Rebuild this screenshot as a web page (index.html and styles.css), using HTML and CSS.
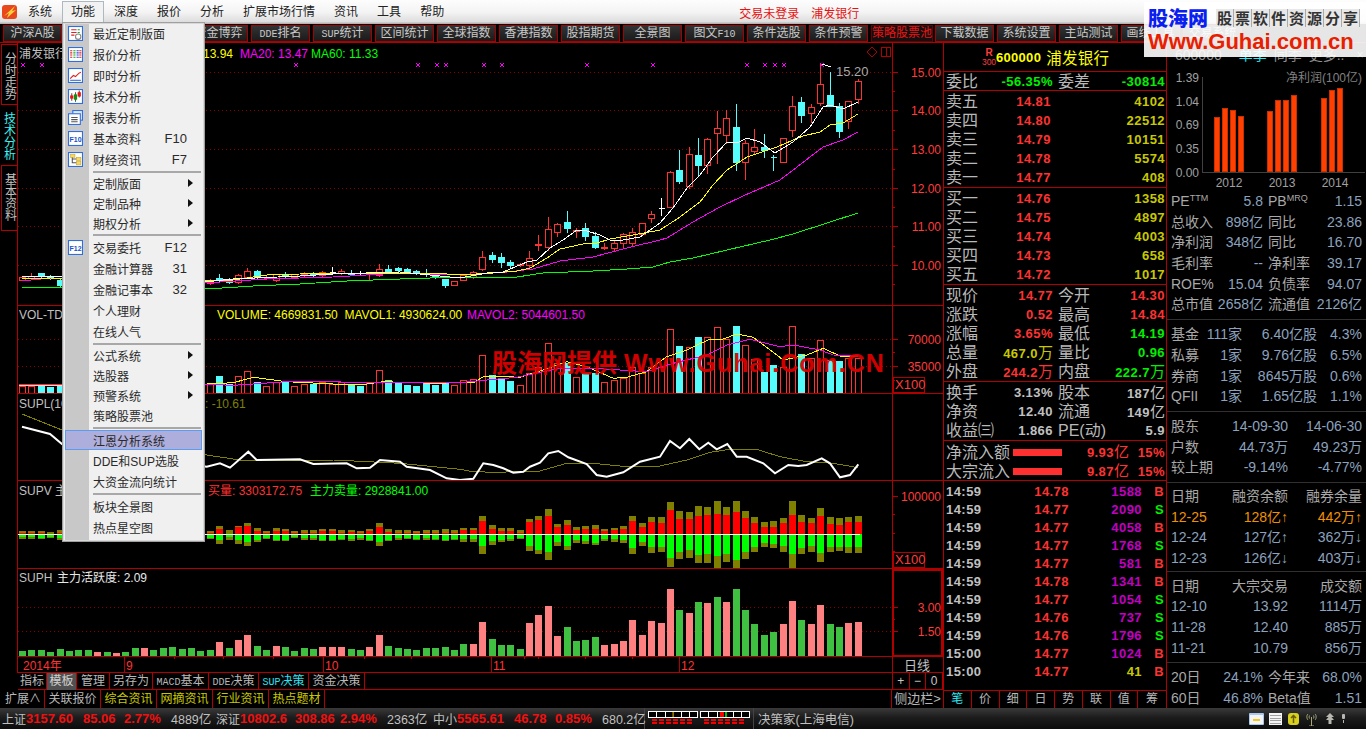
FILE: index.html
```html
<!DOCTYPE html>
<html lang="zh-CN">
<head>
<meta charset="utf-8">
<title>决策家 - 浦发银行</title>
<link rel="stylesheet" href="styles.css">
</head>
<body>
<div class="app">
  <header class="menubar">
    <svg class="logo-mark" viewBox="0 0 16 16"><rect x="0" y="1" width="15" height="14" rx="3" class="lm-a"/><path d="M2 12 L13 2 L10 7 L14 6 L5 14 L7 9 Z" class="lm-b"/></svg>
    <nav class="nav">
      <span class="nav-item">系统</span><span class="nav-item nav-on">功能</span><span class="nav-item">深度</span><span class="nav-item">报价</span><span class="nav-item">分析</span><span class="nav-item">扩展市场行情</span><span class="nav-item">资讯</span><span class="nav-item">工具</span><span class="nav-item">帮助</span>
    </nav>
    <div class="login"><span>交易未登录</span><span>浦发银行</span></div>
  </header>

  <div class="toolbar">
    <span class="tb">沪深A股</span><span class="tb"></span><span class="tb"></span><span class="tb tb-clip">资金博弈</span><span class="tb"><i class="lat">DDE</i>排名</span><span class="tb"><i class="lat">SUP</i>统计</span><span class="tb">区间统计</span><span class="tb">全球指数</span><span class="tb">香港指数</span><span class="tb">股指期货</span><span class="tb">全景图</span><span class="tb">图文<i class="lat">F10</i></span><span class="tb">条件选股</span><span class="tb">条件预警</span><span class="tb tb-on">策略股票池</span><span class="tb">下载数据</span><span class="tb">系统设置</span><span class="tb">主站测试</span><span class="tb">画线工具</span><span class="tb">交易系统</span>
  </div>

  <main class="main">
    <section class="left">
      <div class="upper">
        <aside class="rail">
          <div class="rail-tab rail-a">分时走势</div>
          <div class="rail-tab rail-b">技术分析</div>
          <div class="rail-tab rail-c">基本资料</div>
        </aside>
        <div class="panes">
          <div class="pane pane-k" id="p-k"></div>
          <div class="pane pane-v" id="p-v"></div>
          <div class="pane pane-l" id="p-l"></div>
          <div class="pane pane-s" id="p-s"></div>
          <div class="pane pane-h" id="p-h"></div>
          <div class="pane pane-d" id="p-d"></div>
        </div>
      </div>
      <div class="tabs">
        <div class="tabs-l">
          <span class="tab">指标</span><span class="tab tab-on">模板</span><span class="tab">管理</span><span class="tab">另存为</span><span class="tab"><i class="lat">MACD</i>基本</span><span class="tab"><i class="lat">DDE</i>决策</span><span class="tab tab-cy"><i class="lat">SUP</i>决策</span><span class="tab">资金决策</span>
        </div>
        <div class="tabs-r"><span>+</span><span>−</span><span>0</span></div>
      </div>
      <div class="ext">
        <div class="ext-l">
          <span class="ex">扩展∧</span><span class="ex">关联报价</span><span class="ex ex-y">综合资讯</span><span class="ex ex-y">网摘资讯</span><span class="ex ex-y">行业资讯</span><span class="ex ex-y">热点题材</span>
        </div>
        <div class="ext-r">侧边栏&gt;</div>
      </div>
    </section>

    <section class="quote">
      <div class="q-head"><span class="q-r"><b>R</b>300</span><span class="q-code">600000</span><span class="q-name">浦发银行</span></div>
      <div class="q-sec q-wei">
        <div class="r4"><span class="lb">委比</span><span class="v gr">-56.35%</span><span class="lb l2">委差</span><span class="v gr">-30814</span></div>
      </div>
      <div class="q-sec q-pad">
        <div class="r3"><span class="lb">卖五</span><span class="v rd">14.81</span><span class="v yl">4102</span></div>
        <div class="r3"><span class="lb">卖四</span><span class="v rd">14.80</span><span class="v yl">22512</span></div>
        <div class="r3"><span class="lb">卖三</span><span class="v rd">14.79</span><span class="v yl">10151</span></div>
        <div class="r3"><span class="lb">卖二</span><span class="v rd">14.78</span><span class="v yl">5574</span></div>
        <div class="r3"><span class="lb">卖一</span><span class="v rd">14.77</span><span class="v yl">408</span></div>
      </div>
      <div class="q-sec q-pad">
        <div class="r3"><span class="lb">买一</span><span class="v rd">14.76</span><span class="v yl">1358</span></div>
        <div class="r3"><span class="lb">买二</span><span class="v rd">14.75</span><span class="v yl">4897</span></div>
        <div class="r3"><span class="lb">买三</span><span class="v rd">14.74</span><span class="v yl">4003</span></div>
        <div class="r3"><span class="lb">买四</span><span class="v rd">14.73</span><span class="v yl">658</span></div>
        <div class="r3"><span class="lb">买五</span><span class="v rd">14.72</span><span class="v yl">1017</span></div>
      </div>
      <div class="q-sec q-pad">
        <div class="r4"><span class="lb">现价</span><span class="v rd">14.77</span><span class="lb l2">今开</span><span class="v rd">14.30</span></div>
        <div class="r4"><span class="lb">涨跌</span><span class="v rd">0.52</span><span class="lb l2">最高</span><span class="v rd">14.84</span></div>
        <div class="r4"><span class="lb">涨幅</span><span class="v rd">3.65%</span><span class="lb l2">最低</span><span class="v gr">14.19</span></div>
        <div class="r4"><span class="lb">总量</span><span class="v yl">467.0<u>万</u></span><span class="lb l2">量比</span><span class="v gr">0.96</span></div>
        <div class="r4"><span class="lb">外盘</span><span class="v rd">244.2<u>万</u></span><span class="lb l2">内盘</span><span class="v gr">222.7<u>万</u></span></div>
      </div>
      <div class="q-sec q-pad">
        <div class="r4"><span class="lb">换手</span><span class="v wh">3.13%</span><span class="lb l2">股本</span><span class="v wh">187<u>亿</u></span></div>
        <div class="r4"><span class="lb">净资</span><span class="v wh">12.40</span><span class="lb l2">流通</span><span class="v wh">149<u>亿</u></span></div>
        <div class="r4"><span class="lb">收益㈢</span><span class="v wh">1.866</span><span class="lb l2">PE(动)</span><span class="v wh">5.9</span></div>
      </div>
      <div class="q-sec q-pad">
        <div class="rf"><span class="lb">净流入额</span><span class="flow"></span><span class="v rd">9.93<u>亿</u></span><span class="v rd">15%</span></div>
        <div class="rf"><span class="lb">大宗流入</span><span class="flow"></span><span class="v rd">9.87<u>亿</u></span><span class="v rd">15%</span></div>
      </div>
      <div class="q-ticks">
        <div class="rt"><span class="v wh">14:59</span><span class="v rd">14.78</span><span class="v mg">1588</span><span class="v rd">B</span></div>
        <div class="rt"><span class="v wh">14:59</span><span class="v rd">14.77</span><span class="v mg">2090</span><span class="v gr">S</span></div>
        <div class="rt"><span class="v wh">14:59</span><span class="v rd">14.77</span><span class="v mg">4058</span><span class="v rd">B</span></div>
        <div class="rt"><span class="v wh">14:59</span><span class="v rd">14.77</span><span class="v mg">1768</span><span class="v gr">S</span></div>
        <div class="rt"><span class="v wh">14:59</span><span class="v rd">14.77</span><span class="v mg">581</span><span class="v rd">B</span></div>
        <div class="rt"><span class="v wh">14:59</span><span class="v rd">14.78</span><span class="v mg">1341</span><span class="v rd">B</span></div>
        <div class="rt"><span class="v wh">14:59</span><span class="v rd">14.77</span><span class="v mg">1054</span><span class="v gr">S</span></div>
        <div class="rt"><span class="v wh">14:59</span><span class="v rd">14.76</span><span class="v mg">737</span><span class="v gr">S</span></div>
        <div class="rt"><span class="v wh">14:59</span><span class="v rd">14.76</span><span class="v mg">1796</span><span class="v gr">S</span></div>
        <div class="rt"><span class="v wh">15:00</span><span class="v rd">14.77</span><span class="v mg">1024</span><span class="v rd">B</span></div>
        <div class="rt"><span class="v wh">15:00</span><span class="v rd">14.77</span><span class="v yl">41</span><span class="v rd">B</span></div>
      </div>
      <div class="q-tabs"><span class="qt qt-on">笔</span><span class="qt">价</span><span class="qt">细</span><span class="qt">日</span><span class="qt">势</span><span class="qt">联</span><span class="qt">值</span><span class="qt">筹</span></div>
    </section>

    <section class="side">
      <div class="s-head"><span>600000</span><span class="s-cy">单季</span><span>同季</span><span>更多..</span><span class="s-x">×</span></div>
      <div class="s-chart" id="p-e"></div>
      <div class="s-sec s1">
        <div class="g4"><span class="sl">PE<sup>TTM</sup></span><span class="sv">5.8</span><span class="sl s2">PB<sup>MRQ</sup></span><span class="sv">1.15</span></div>
        <div class="g4"><span class="sl">总收入</span><span class="sv">898亿</span><span class="sl s2">同比</span><span class="sv">23.86</span></div>
        <div class="g4"><span class="sl">净利润</span><span class="sv">348亿</span><span class="sl s2">同比</span><span class="sv">16.70</span></div>
        <div class="g4"><span class="sl">毛利率</span><span class="sv">--</span><span class="sl s2">净利率</span><span class="sv">39.17</span></div>
        <div class="g4"><span class="sl">ROE%</span><span class="sv">15.04</span><span class="sl s2">负债率</span><span class="sv">94.07</span></div>
        <div class="g4"><span class="sl">总市值</span><span class="sv">2658亿</span><span class="sl s2">流通值</span><span class="sv">2126亿</span></div>
      </div>
      <div class="s-sec">
        <div class="gf"><span class="sl">基金</span><span class="sv">111家</span><span class="sv">6.40亿股</span><span class="sv">4.3%</span></div>
        <div class="gf"><span class="sl">私募</span><span class="sv">1家</span><span class="sv">9.76亿股</span><span class="sv">6.5%</span></div>
        <div class="gf"><span class="sl">券商</span><span class="sv">1家</span><span class="sv">8645万股</span><span class="sv">0.6%</span></div>
        <div class="gf"><span class="sl">QFII</span><span class="sv">1家</span><span class="sv">1.65亿股</span><span class="sv">1.1%</span></div>
      </div>
      <div class="s-sec">
        <div class="g3"><span class="sl">股东</span><span class="sv">14-09-30</span><span class="sv">14-06-30</span></div>
        <div class="g3"><span class="sl">户数</span><span class="sv">44.73万</span><span class="sv">49.23万</span></div>
        <div class="g3"><span class="sl">较上期</span><span class="sv">-9.14%</span><span class="sv">-4.77%</span></div>
      </div>
      <div class="s-sec s4">
        <div class="g3"><span class="sl">日期</span><span class="sl ar">融资余额</span><span class="sl ar">融券余量</span></div>
        <div class="g3 or"><span class="sv al">12-25</span><span class="sv">128亿↑</span><span class="sv">442万↑</span></div>
        <div class="g3"><span class="sv al">12-24</span><span class="sv">127亿↑</span><span class="sv">362万↓</span></div>
        <div class="g3"><span class="sv al">12-23</span><span class="sv">126亿↓</span><span class="sv">403万↓</span></div>
      </div>
      <div class="s-sec">
        <div class="g3"><span class="sl">日期</span><span class="sl ar">大宗交易</span><span class="sl ar">成交额</span></div>
        <div class="g3"><span class="sv al">12-10</span><span class="sv">13.92</span><span class="sv">1114万</span></div>
        <div class="g3"><span class="sv al">11-28</span><span class="sv">12.40</span><span class="sv">885万</span></div>
        <div class="g3"><span class="sv al">11-21</span><span class="sv">10.79</span><span class="sv">856万</span></div>
      </div>
      <div class="s-sec s-end">
        <div class="g4"><span class="sl">20日</span><span class="sv">24.1%</span><span class="sl s2">今年来</span><span class="sv">68.0%</span></div>
        <div class="g4"><span class="sl">60日</span><span class="sv">46.8%</span><span class="sl s2">Beta值</span><span class="sv">1.51</span></div>
      </div>
    </section>
  </main>

  <footer class="status">
    <div class="ticker">
      <span class="st-l">上证</span><span class="st-n">3157.60</span><span class="st-n">85.06</span><span class="st-n">2.77%</span><span class="st-m">4889亿</span>
      <span class="st-l">深证</span><span class="st-n">10802.6</span><span class="st-n">308.86</span><span class="st-n">2.94%</span><span class="st-m">2363亿</span>
      <span class="st-l">中小</span><span class="st-n">5565.61</span><span class="st-n">46.78</span><span class="st-n">0.85%</span><span class="st-m">680.2亿</span>
    </div>
    <div class="gauges">
      <svg class="gauge" viewBox="0 0 50 16">
        <rect x=".5" y=".5" width="49" height="6" class="g-box"/><path d="M8.5 0V7M17.5 0V7M25.5 0V7M33.5 0V7M41.5 0V7" class="g-div"/><rect x="24" y="1" width="1" height="5" class="g-r"/><rect x="25" y="1" width="1" height="5" class="g-g"/>
        <path d="M4 9H46M4 12H46" class="g-dash"/>
      </svg>
      <svg class="gauge" viewBox="0 0 50 16">
        <rect x=".5" y=".5" width="49" height="6" class="g-box"/><path d="M8.5 0V7M17.5 0V7M25.5 0V7M33.5 0V7M41.5 0V7" class="g-div"/><rect x="20" y="1" width="4" height="5" class="g-r"/><rect x="25" y="1" width="2" height="5" class="g-g"/>
        <path d="M4 9H46M4 12H46" class="g-dash"/>
      </svg>
    </div>
    <span class="st-src">决策家(上海电信)</span>
    <div class="st-icons">
      <svg class="si-note" viewBox="0 0 15 12"><rect width="15" height="12" rx="1" class="si-a"/><rect x="1" y="2" width="13" height="9" class="si-b"/><rect x="4" y="6" width="7" height="2" class="si-c"/></svg>
      <svg class="si-list" viewBox="0 0 13 12"><rect width="13" height="12" class="si-b"/><path d="M1 2.5H12M1 5H12M1 7.5H12M1 10H12" class="si-d"/></svg>
      <svg class="si-coin" viewBox="0 0 11 12"><rect width="11" height="12" rx="3" class="si-e"/><path d="M5.5 2V10M3 5L5.500 2.500L8 5" class="si-f"/></svg>
      <svg class="si-ant" viewBox="0 0 11 14"><path d="M5.500 5V14M3 14H8M2 2C0 4 1 7 2 8M9 2C11 4 10 7 9 8M3.500 3.500C3 4.500 3 5.500 3.500 6.500M7.500 3.500C8 4.500 8 5.500 7.500 6.500" class="si-g"/></svg>
      <svg class="si-up" viewBox="0 0 8 11"><path d="M4 0L8 4H5.500L8 7H5.500V11H2.500V7H0L2.500 4H0Z" class="si-h"/></svg>
      <svg class="si-ex" viewBox="0 0 3 9"><rect width="3" height="5" rx="1" class="si-h"/><rect x="1" y="6" width="1" height="3" class="si-h"/></svg>
    </div>
  </footer>

  <div class="menu">
    <div class="mi"><svg class="ic" viewBox="0 0 14 14"><rect x=".5" y=".5" width="13" height="13" class="ic-f"/><path d="M3 3.500H8M3 6H8M3 8.500H6" class="ic-r"/><path d="M9 3.500H11M9 6H11" class="ic-g"/><circle cx="9.500" cy="10" r="2.500" class="ic-c"/></svg><span class="mt">最近定制版面</span></div>
    <div class="mi"><svg class="ic" viewBox="0 0 14 14"><rect x=".5" y=".5" width="13" height="13" class="ic-f"/><path d="M3 3V11" class="ic-rd"/><path d="M6 3V11" class="ic-gd"/><path d="M9 3V11" class="ic-bd"/><path d="M11.500 3V11" class="ic-rd"/></svg><span class="mt">报价分析</span></div>
    <div class="mi"><svg class="ic" viewBox="0 0 14 14"><rect x=".5" y=".5" width="13" height="13" class="ic-f"/><path d="M2 10L5 7L7 8L10 5L12 4" class="ic-r"/><path d="M2 11.500H12" class="ic-b"/></svg><span class="mt">即时分析</span></div>
    <div class="mi"><svg class="ic" viewBox="0 0 14 14"><rect x=".5" y=".5" width="13" height="13" class="ic-f"/><path d="M3.500 4V11M10.500 1.500V8" class="ic-k"/><path d="M7 3V12" class="ic-k"/><rect x="2" y="6" width="3" height="3" class="ic-rf"/><rect x="5.500" y="5" width="3" height="5" class="ic-gf"/><rect x="9" y="3" width="3" height="4" class="ic-rf"/></svg><span class="mt">技术分析</span></div>
    <div class="mi"><svg class="ic" viewBox="0 0 14 14"><rect x="4.500" y=".5" width="9" height="9" class="ic-f2"/><rect x=".5" y="3.500" width="11" height="10" class="ic-f"/><path d="M3 7H9M3 9H9M3 11H9" class="ic-k"/></svg><span class="mt">报表分析</span></div>
    <div class="mi"><svg class="ic" viewBox="0 0 14 14"><rect x=".5" y=".5" width="13" height="13" class="ic-f"/><text x="1.500" y="10.500" class="ic-t">F10</text></svg><span class="mt">基本资料</span><span class="mk">F10</span></div>
    <div class="mi"><svg class="ic" viewBox="0 0 14 14"><rect x=".5" y=".5" width="13" height="13" class="ic-f"/><path d="M4 4V10H8M4 6.500H8" class="ic-k"/><rect x="2.500" y="2" width="4" height="3" class="ic-yf"/><rect x="8" y="5" width="4" height="3" class="ic-yf"/><rect x="8" y="9" width="4" height="3" class="ic-yf"/></svg><span class="mt">财经资讯</span><span class="mk">F7</span></div>
    <hr class="msep msep-3">
    <div class="mi ms"><span class="mt">定制版面</span><i class="arrow"></i></div>
    <div class="mi ms"><span class="mt">定制品种</span><i class="arrow"></i></div>
    <div class="mi ms"><span class="mt">期权分析</span><i class="arrow"></i></div>
    <hr class="msep">
    <div class="mi"><svg class="ic" viewBox="0 0 14 14"><rect x=".5" y=".5" width="13" height="13" class="ic-f"/><text x="1.500" y="10.500" class="ic-t">F12</text></svg><span class="mt">交易委托</span><span class="mk">F12</span></div>
    <div class="mi"><span class="mt">金融计算器</span><span class="mk">31</span></div>
    <div class="mi"><span class="mt">金融记事本</span><span class="mk">32</span></div>
    <div class="mi"><span class="mt">个人理财</span></div>
    <div class="mi"><span class="mt">在线人气</span></div>
    <hr class="msep msep-3">
    <div class="mi ms"><span class="mt">公式系统</span><i class="arrow"></i></div>
    <div class="mi ms"><span class="mt">选股器</span><i class="arrow"></i></div>
    <div class="mi ms"><span class="mt">预警系统</span><i class="arrow"></i></div>
    <div class="mi"><span class="mt">策略股票池</span></div>
    <hr class="msep">
    <div class="mi ms mi-on"><span class="mt">江恩分析系统</span></div>
    <div class="mi"><span class="mt">DDE和SUP选股</span></div>
    <div class="mi"><span class="mt">大资金流向统计</span></div>
    <hr class="msep">
    <div class="mi"><span class="mt">板块全景图</span></div>
    <div class="mi"><span class="mt">热点星空图</span></div>
  </div>

  <div class="wm">股海网提供 <span class="wm-lat">Www.Guhai.Com.CN</span></div>

  <div class="brand">
    <div class="brand-top"><b class="brand-cn">股海网</b><span class="brand-sub"><i>股</i><i>票</i><i>软</i><i>件</i><i>资</i><i>源</i><i>分</i><i>享</i></span></div>
    <div class="brand-url">Www.Guhai.com.cn</div>
  </div>
</div>
<script src="chart.js"></script>
</body>
</html>
```
FILE: styles.css
```css
* { box-sizing: border-box; }
html, body { margin: 0; padding: 0; background: #000; }
body { width: 1366px; height: 729px; overflow: hidden; font: 12px "Liberation Sans", "Noto Sans CJK SC", sans-serif; color: #c0c0c0; }
i, u { font-style: normal; text-decoration: none; }
.app { position: relative; width: 1366px; height: 729px; display: flex; flex-direction: column; }

/* menu bar */
.menubar { height: 24px; display: flex; align-items: center; background: linear-gradient(#fdfdfd, #f4f4f4 50%, #dedede 90%, #a8a8a8); color: #222; }
.logo-mark { width: 16px; height: 16px; margin-left: 2px; }
.lm-a { fill: #e8481c; }
.lm-b { fill: #ffd23c; }
.nav { display: flex; gap: 1px; margin-left: 1px; height: 22px; }
.nav-item { padding: 0 9px; line-height: 22px; white-space: nowrap; font-size: 12px; }
.nav-on { border: 1px solid #aeb8c0; border-bottom: 0; background: #f2f2f2; padding: 0 8px; line-height: 21px; }
.login { margin-left: 286px; display: flex; gap: 12px; color: #e81010; }

/* toolbar */
.toolbar { height: 19px; display: flex; gap: 3px; padding-left: 3px; background: #000; border-bottom: 1px solid #b00000; overflow: hidden; }
.tb { flex: 0 0 59px; height: 17px; margin-top: 1px; border: 1px solid #a80000; background: linear-gradient(#333, #1a1a1a); color: #c8c8c8; text-align: center; line-height: 15px; font-size: 12px; white-space: nowrap; }
.tb-on { flex-basis: 60px; margin-right: -1px; background: #101010; color: #f01010; border-color: #600; }
.lat { font: 10px/12px "Liberation Mono", monospace; }

/* layout */
.main { height: 665px; display: flex; background: #000; }
.left { width: 943px; display: flex; flex-direction: column; }
.upper { height: 630px; display: flex; }
.rail { width: 18px; border-right: 1px solid #b00000; display: flex; flex-direction: column; background: #000; padding-top: 1px; }
.rail-tab { writing-mode: vertical-rl; text-orientation: upright; font-size: 12px; line-height: 12px; letter-spacing: 0; width: 17px; display: flex; align-items: center; }
.rail-a { height: 61px; padding-top: 7px; border: 1px solid #b00000; border-right: 0; margin-left: 1px; width: 16px; }
.rail-b { height: 60px; padding-top: 7px; color: #40f0f0; }
.rail-c { height: 66px; padding-top: 7px; border: 1px solid #b00000; border-right: 0; margin-left: 1px; width: 16px; }
.panes { width: 925px; display: flex; flex-direction: column; }
.pane { position: relative; width: 925px; }
.pane svg { display: block; }
.pane-k { height: 263px; }
.pane-v { height: 88px; }
.pane-l { height: 87px; }
.pane-s { height: 88px; }
.pane-h { height: 88px; }
.pane-d { height: 16px; }

/* chart svg */
svg text { font-family: "Liberation Sans", "Noto Sans CJK SC", sans-serif; font-size: 12px; }
.grid { stroke: #8c0000; stroke-dasharray: 1 3; fill: none; }
.frame { stroke: #b00000; fill: none; shape-rendering: crispEdges; }
.frame2 { stroke: #b00000; stroke-width: 2; fill: none; shape-rendering: crispEdges; }
.up { fill: #000; stroke: #ff3232; shape-rendering: crispEdges; }
.dn { fill: #54fcfc; stroke: #54fcfc; shape-rendering: crispEdges; }
.upw { stroke: #ff3232; fill: none; shape-rendering: crispEdges; }
.dnw { stroke: #54fcfc; fill: none; shape-rendering: crispEdges; }
.whw { stroke: #fff; fill: none; shape-rendering: crispEdges; }
.ln { fill: none; stroke-width: 1; shape-rendering: crispEdges; }
.ln-w { stroke: #fff; }
.ln-y { stroke: #ffff00; }
.ln-m { stroke: #ff00ff; }
.ln-g { stroke: #00ff00; }
.ln-o { stroke: #808000; }
.ln-wt { fill: none; stroke: #fff; stroke-width: 2; }
.xm { stroke: #ff00ff; fill: none; shape-rendering: crispEdges; }
.b-ol { fill: #808000; }
.b-rd { fill: #ff0000; }
.b-gr { fill: #00ff00; }
.b-pk { fill: #ff8080; }
.b-gg { fill: #40c040; }
.zero { stroke: #fff; shape-rendering: crispEdges; }
.t-ax { fill: #ff3c3c; text-anchor: end; }
.t-lb { fill: #c0c0c0; }
.t-wh { fill: #e8e8e8; }
.t-y { fill: #ffff00; }
.t-m { fill: #ff00ff; }
.t-g { fill: #00ff00; }
.t-r { fill: #ff3232; }
.t-o { fill: #808000; }
.t-hi { fill: #a8a8a8; font-size: 13px; }
.t-day { fill: #c0c0c0; text-anchor: middle; font-size: 13px; }
.t-x { fill: #ff3c3c; font-size: 13px; }
.icon-l { stroke: #b00000; fill: none; }
.e-bar { fill: #ff4000; stroke: #c83000; stroke-width: 1; shape-rendering: crispEdges; }
.e-ax { fill: none; stroke: #404040; shape-rendering: crispEdges; }
svg text.e-t { fill: #a0a0a0; font-size: 12px; }
svg text.e-n { fill: #808080; font-size: 12px; }
.e-end { text-anchor: end; }
.e-mid { text-anchor: middle; }

/* tabs */
.tabs { margin-left: 18px; height: 17px; display: flex; border-bottom: 1px solid #b00000; }
.tabs-l { width: 874px; display: grid; grid-template-columns: 29px 30px 33px 43px 56px 50px 50px 56px; }
.tab { border-right: 1px solid #b00000; text-align: center; line-height: 17px; color: #b8b8b8; white-space: nowrap; }
.tab-on { background: #505050; color: #d0d0d0; }
.tab-cy { color: #30e0f0; }
.tabs-r { width: 51px; display: grid; grid-template-columns: repeat(3, 1fr); border-left: 1px solid #b00000; }
.tabs-r span { border-right: 1px solid #b00000; text-align: center; line-height: 17px; color: #c8c8c8; }
.ext { height: 18px; display: flex; margin-left: 2px; }
.ext-l { width: 889px; display: grid; grid-template-columns: 43px repeat(5, 56px); }
.ex { border-right: 1px solid #b00000; text-align: center; line-height: 18px; color: #b8b8b8; white-space: nowrap; }
.ex-y { color: #c8c800; }
.ext-r { width: 52px; border-left: 1px solid #b00000; line-height: 18px; text-align: center; color: #b8b8b8; font-size: 13px; white-space: nowrap; }

/* quote */
.quote { width: 224px; height: 665px; border-left: 1px solid #b00000; border-right: 1px solid #b00000; display: flex; flex-direction: column; font-size: 16px; }
.q-head { height: 29px; display: flex; align-items: center; border-bottom: 1px solid #b00000; padding-left: 38px; }
.q-r { display: flex; flex-direction: column; align-items: center; font-size: 8.500px; line-height: 9px; color: #ff3c3c; width: 14px; }
.q-r b { font-size: 10px; line-height: 10px; }
.q-code { font-weight: 700; font-size: 13px; color: #ffff00; margin-left: 0; letter-spacing: .3px; }
.q-name { font-size: 15.500px; color: #ffff00; margin-left: 5px; letter-spacing: .3px; }
.q-sec { border-bottom: 1px solid #b00000; padding: 0 1px 0 2px; }
.q-wei { height: 19px; }
.q-pad { padding-top: 1px; }
.lb { color: #b8b8b8; font-size: 16px; line-height: 19px; white-space: nowrap; }
.l2 { padding-left: 5px; }
.v { font: 700 13px/19px "Liberation Sans", "Noto Sans CJK SC", sans-serif; text-align: right; letter-spacing: .45px; white-space: nowrap; }
.v u { font-weight: 400; font-size: 15px; letter-spacing: 0; }
.rd { color: #ff3232; }
.gr { color: #00f000; }
.yl { color: #c8c800; }
.wh { color: #c0c0c0; }
.mg { color: #c000c0; }
.r3 { display: grid; grid-template-columns: 45px 60px 1fr; height: 19px; }
.r4 { display: grid; grid-template-columns: 40px 67px 50px 1fr; height: 19px; }
.rf { display: grid; grid-template-columns: 67px 58px 1fr 36px; height: 19px; align-items: center; }
.flow { width: 49px; height: 7px; background: #ff3030; }
.q-ticks { flex: 1; padding: 2px 2px 0 2px; border-bottom: 1px solid #b00000; }
.rt { display: grid; grid-template-columns: 36px 87px 73px 1fr; height: 18px; }
.rt .v { line-height: 18px; }
.rt .v:first-child { text-align: left; }
.q-tabs { height: 17px; display: grid; grid-template-columns: repeat(8, 1fr); font-size: 12px; }
.qt { border-right: 1px solid #b00000; text-align: center; line-height: 17px; color: #b8b8b8; }
.qt:last-child { border-right: 0; }
.qt-on { color: #30e8f0; }

/* side */
.side { width: 199px; height: 665px; font-size: 14px; display: flex; flex-direction: column; color: #a0a8b0; }
.s-head { height: 24px; display: flex; padding-left: 8px; gap: 7px; line-height: 24px; color: #909090; align-items: center; white-space: nowrap; }
.s-head span:nth-child(2) { margin-left: 10px; }
.s-cy { color: #30e8f0; }
.s-x { margin-left: 5px; font-size: 12px; }
.s-chart { height: 124px; }
.s-chart svg { display: block; }
.s-sec { padding: 4px 4px 4px 4px; border-bottom: 1px solid #303030; }
.s1 { padding-top: 0; }
.s4 { padding-top: 3px; padding-bottom: 2px; }
.s-end { border-bottom: 0; }
.sl { color: #a8a8a8; white-space: nowrap; line-height: 20.700px; }
.sl sup { font-size: 9px; line-height: 0; vertical-align: 5px; }
.sv { color: #8ca2be; text-align: right; white-space: nowrap; line-height: 20.700px; }
.ar { text-align: right; }
.al { text-align: left; }
.s2 { padding-left: 5px; }
.g4 { display: grid; grid-template-columns: 41px 51px 46px 1fr; height: 20.700px; }
.gf { display: grid; grid-template-columns: 28px 43px 75px 1fr; height: 20.700px; }
.g3 { display: grid; grid-template-columns: 40px 77px 1fr; height: 20.700px; }
.or .sv { color: #f09000; }

/* status */
.status { height: 21px; display: flex; align-items: center; background: linear-gradient(#3a3a3a, #1c1c1c 45%, #0c0c0c); }
.ticker { width: 645px; display: grid; grid-template-columns: 2px 24px 57px 41px 47px 45px 24px 55px 45px 47px 46px 24px 57px 41px 47px 1fr; align-items: center; border-right: 1px solid #444; height: 21px; white-space: nowrap; }
.ticker::before { content: ""; }
.st-l { font-size: 12px; color: #c0c0c0; }
.st-n { font: 700 13px "Liberation Sans", sans-serif; color: #f01010; }
.st-m { font-size: 12.500px; color: #c0c0c0; }
.gauges { display: flex; gap: 2px; padding: 0 3px; border-right: 1px solid #444; height: 21px; align-items: center; }
.gauge { width: 50px; height: 16px; display: block; }
.g-box { fill: #000; stroke: #fff; shape-rendering: crispEdges; }
.g-div { stroke: #fff; shape-rendering: crispEdges; fill: none; }
.g-r { fill: #ff0000; }
.g-g { fill: #00c000; }
.g-dash { stroke: #f00000; stroke-width: 2; stroke-dasharray: 5 2; fill: none; shape-rendering: crispEdges; }
.st-src { margin-left: 4px; font-size: 12.500px; color: #c0c0c0; white-space: nowrap; }
.st-icons { margin-left: auto; display: flex; align-items: center; height: 21px; }
.si-note { width: 15px; height: 12px; margin-right: 5px; }
.si-list { width: 13px; height: 12px; margin-right: 6px; }
.si-coin { width: 11px; height: 12px; margin-right: 7px; }
.si-ant { width: 11px; height: 14px; margin-right: 9px; }
.si-up { width: 8px; height: 11px; margin-right: 8px; }
.si-ex { width: 3px; height: 9px; margin-right: 21px; }
.si-a { fill: #a8c8f0; }
.si-b { fill: #f4f4f4; }
.si-c { fill: #f0c820; }
.si-d { stroke: #a0a0a0; fill: none; shape-rendering: crispEdges; }
.si-e { fill: #d8d020; }
.si-f { stroke: #6a5a00; stroke-width: 1.500; fill: none; }
.si-g { stroke: #a8a878; fill: none; }
.si-h { fill: #b8b8b0; }

/* dropdown */
.menu { position: absolute; left: 62px; top: 22px; width: 143px; height: 520px; padding: 0 2px 2px 2px; border: 1px solid #a0a0a0; box-shadow: inset 0 0 0 1px #d8d8d8; background: linear-gradient(90deg, #f0f0f0 2px, #c8c8c8 2px, #c8c8c8 26px, #f0f0f0 26px); color: #2a2a2a; font-size: 12px; }
.mi { position: relative; height: 21px; display: flex; align-items: center; padding-left: 28px; white-space: nowrap; }
.ms { height: 20px; }
.mt { flex: 1; }
.mk { position: absolute; right: 15px; font-size: 13px; }
.ic { position: absolute; left: 3px; top: 3px; width: 15px; height: 15px; }
.ic-f { fill: #fff; stroke: #2f6fdc; }
.ic-f2 { fill: #dce8fa; stroke: #2f6fdc; }
.ic-r { stroke: #e02020; fill: none; }
.ic-g { stroke: #20a020; fill: none; }
.ic-b { stroke: #2f6fdc; fill: none; }
.ic-k { stroke: #555; fill: none; }
.ic-c { fill: #fff; stroke: #888; }
.ic-rd { stroke: #e02020; stroke-width: 2; stroke-dasharray: 1 1; fill: none; }
.ic-gd { stroke: #20a020; stroke-width: 2; stroke-dasharray: 1 1; fill: none; }
.ic-bd { stroke: #2040e0; stroke-width: 2; stroke-dasharray: 1 1; fill: none; }
.ic-rf { fill: #f01010; }
.ic-gf { fill: #109010; }
.ic-yf { fill: #f8d860; stroke: #c0a020; stroke-width: .5; }
svg text.ic-t { font-size: 6.500px; fill: #1a50c8; font-weight: 700; }
.msep { height: 2px; border: 0; margin: 1px 0 1px 28px; background: #a8a8a8; margin-right: 1px; }
.msep-3 { margin-top: 1px; margin-bottom: 0; }
.arrow { position: absolute; right: 9px; top: 6px; border-left: 5px solid #111; border-top: 4px solid transparent; border-bottom: 4px solid transparent; }
.mi-on { background: #aeaedc; outline: 1px solid #5a9cf0; outline-offset: -1px; }

/* overlays */
.wm { position: absolute; left: 492px; top: 349px; font: 700 25px/28px "Liberation Sans", "Noto Sans CJK SC", sans-serif; color: #e00000; white-space: nowrap; opacity: .93; }
.wm-lat { letter-spacing: 1px; }
.brand { position: absolute; left: 1144px; top: 2px; width: 222px; height: 55px; background: rgba(255, 255, 255, .9); padding: 4px 4px 0 4px; overflow: hidden; }
.brand-top { display: flex; align-items: center; height: 23px; }
.brand-cn { font: 900 20px/23px "Noto Sans CJK SC", sans-serif; color: #0a20f0; width: 68px; }
.brand-sub { display: flex; }
.brand-sub i { width: 18px; height: 18px; font: 700 15px/18px "Noto Sans CJK SC", sans-serif; color: #333; text-align: center; background: #e8e8e8; border-right: 1px solid #aaa; }
.brand-url { font: 700 22px/25px "Liberation Sans", sans-serif; color: #e82000; white-space: nowrap; }
```
FILE: chart.js
```js
(function () {
  var pitch = 9.39;
  function bx(i) { return Math.round(19 + i * pitch); }
  function svg(id, x, y, w, h, body) {
    document.getElementById(id).innerHTML =
      '<svg xmlns="http://www.w3.org/2000/svg" width="' + w + '" height="' + h + '" viewBox="' + x + ' ' + y + ' ' + w + ' ' + h + '">' + body + '</svg>';
  }
  function rect(x, y, w, h, c) { return '<rect x="' + x + '" y="' + y + '" width="' + w + '" height="' + h + '" class="' + c + '"/>'; }
  function line(x1, y1, x2, y2, c) { return '<line x1="' + x1 + '" y1="' + y1 + '" x2="' + x2 + '" y2="' + y2 + '" class="' + c + '"/>'; }
  function text(x, y, s, c) { return '<text x="' + x + '" y="' + y + '" class="' + c + '">' + s + '</text>'; }
  function poly(pts, c) { return '<polyline points="' + pts.map(function (p) { return p.join(','); }).join(' ') + '" class="' + c + '"/>'; }
  function zoomPts(a, ox, oy) { // crop coordinates (3x) to page pixels
    var r = [];
    for (var i = 0; i < a.length; i += 2) r.push([+(ox + a[i] / 3).toFixed(1), +(oy + a[i + 1] / 3).toFixed(1)]);
    return r;
  }
  function grid(ys) { return ys.map(function (y) { return line(18, y + .5, 892, y + .5, 'grid'); }).join(''); }
  function ticks(ys, len) { return ys.map(function (y) { return line(892, y + .5, 892 + len, y + .5, 'frame'); }).join(''); }
  function frame(y0, y1) { return line(892.5, y0, 892.5, y1, 'frame') + line(18, y1 - .5, 943, y1 - .5, 'frame'); }
  function axis(list) { return list.map(function (a) { return text(941, a[0] + 5, a[1], 't-ax'); }).join(''); }

  /* candles: [i, bodyTop, bodyBottom, high, low, kind] */
  var K = [
    [0,277,280,277,280,'u'],[1,276,278,273,279,'u'],[2,273,276,273,277,'d'],[3,276,278,275,279,'d'],[4,280,285,279,287,'d'],
    [20,280,283,279,284,'u'],[21,278,280,274,281,'d'],[22,279,282,278,283,'d'],[23,275,282,274,283,'u'],[24,271,277,268,278,'u'],
    [25,271,277,270,278,'d'],[26,278,278,276,279,'u'],[27,274,280,274,281,'u'],[28,274,276,272,278,'d'],[29,274,277,274,278,'u'],
    [30,274,275,272,276,'u'],[31,273,274,272,276,'d'],[32,272,275,271,276,'u'],[33,272,272,267,274,'w'],[34,271,273,269,274,'u'],
    [35,273,274,270,275,'d'],[36,273,273,271,275,'w'],[37,273,274,272,279,'u'],[38,269,275,264,276,'u'],[39,269,271,265,272,'d'],
    [40,268,270,267,272,'d'],[41,269,272,268,273,'d'],[42,271,273,270,274,'d'],[43,273,274,269,276,'d'],[44,275,277,273,278,'d'],
    [45,279,285,279,287,'d'],[46,281,285,281,285,'u'],
    [47,275,280,275,280,'u'],[48,272,277,271,278,'u'],[49,257,269,251,270,'u'],[50,255,259,252,262,'d'],[51,257,262,253,267,'d'],
    [52,262,265,260,267,'d'],[53,264,265,263,266,'u'],[54,258,265,251,267,'u'],[55,244,245,235,250,'u'],[56,229,247,217,250,'u'],
    [57,224,232,223,236,'u'],[58,222,228,211,232,'d'],[59,230,231,228,237,'u'],[60,228,236,223,240,'d'],[61,236,247,232,248,'d'],
    [62,247,248,243,249,'u'],[63,243,248,240,250,'u'],[64,234,243,233,247,'u'],[65,232,243,228,245,'u'],[66,223,234,223,234,'u'],
    [67,214,218,211,222,'u'],[68,208,208,198,215,'w'],[69,172,207,171,207,'u'],[70,170,181,150,183,'d'],[71,154,186,147,188,'u'],
    [72,155,165,138,175,'d'],[73,139,165,138,173,'u'],[74,128,133,111,163,'u'],[75,118,135,110,143,'u'],[76,127,162,104,170,'d'],
    [77,143,162,140,179,'u'],[78,147,151,129,154,'u'],[79,147,150,134,157,'d'],[80,157,157,155,170,'d'],[81,138,162,138,162,'u'],
    [82,106,130,96,136,'u'],[83,102,115,97,122,'d'],[84,107,113,104,122,'u'],[85,84,103,64,105,'u'],[86,95,106,72,106,'d'],
    [87,106,131,103,137,'d'],[88,101,121,101,128,'u'],[89,81,99,79,103,'u']
  ];
  var kBody = '';
  K.forEach(function (c) {
    var i = c[0], x = bx(i), cx = x + 3.5, k = c[5];
    var w = k === 'u' ? 'upw' : k === 'd' ? 'dnw' : 'whw';
    kBody += line(cx, c[3], cx, c[1], w) + line(cx, c[2], cx, c[4] + 1, w);
    if (c[2] - c[1] < 1) kBody += line(x + .5, c[1] + .5, x + 6.5, c[1] + .5, w);
    else kBody += rect(x + .5, c[1] + .5, 6, c[2] - c[1], k === 'u' ? 'up' : 'dn');
  });

  var maW = [[22,277],[50,276],[204,282],[233,279],[300,276],[333,274],[400,272],[460,278],[487,273],[503,272],[527,262],[537,260],[550,248],[563,240],[577,230],[587,231],[600,235],[610,240],[623,240],[640,237],[660,223],[673,208],[687,188],[700,175],[713,157],[727,142],[737,143],[747,138],[760,142],[775,153],[793,142],[810,127],[823,107],[830,105],[843,109],[858,102]];
  var maY = [[22,279],[50,278],[204,281],[233,280],[267,275],[333,273],[433,273],[460,275],[493,273],[517,271],[530,268],[547,258],[560,249],[583,244],[597,243],[610,239],[633,235],[660,230],[680,217],[700,202],[713,185],[727,170],[747,157],[777,147],[793,140],[803,136],[820,132],[830,125],[843,123],[858,114]];
  var maM = [[22,281],[50,278],[204,283],[267,279],[333,277],[400,273],[460,275],[507,272],[533,269],[560,261],[593,257],[627,248],[660,240],[667,238],[693,222],[720,207],[743,196],[780,180],[797,167],[823,147],[843,140],[858,132]];
  var maG = [[22,287],[185,287],[207,289],[253,286],[300,284],[347,281],[400,279],[460,277],[517,277],[543,273],[593,271],[627,269],[653,267],[670,262],[693,258],[727,250],[770,240],[793,234],[827,223],[858,213]];

  var marks = [[23,65],[42,65],[296,65],[418,65],[437,65],[446,65],[484,65],[502,65],[587,65],[653,65],[747,65],[765,65],[775,65],[784,65],[822,65]];
  var mk = marks.map(function (m) {
    return '<path d="M' + (m[0] - 2) + ' ' + (m[1] - 2) + 'L' + (m[0] + 2) + ' ' + (m[1] + 2) + 'M' + (m[0] + 2) + ' ' + (m[1] - 2) + 'L' + (m[0] - 2) + ' ' + (m[1] + 2) + '" class="xm"/>';
  }).join('');

  var minorK = [91, 130, 169, 207, 246, 284];
  svg('p-k', 18, 43, 925, 263,
    grid([72, 110, 149, 188, 226, 265]) + kBody +
    poly(maG, 'ln ln-g') + poly(maM, 'ln ln-m') + poly(maY, 'ln ln-y') + poly(maW, 'ln ln-w') + mk +
    frame(43, 306) + ticks([72, 110, 149, 188, 226, 265], 6) + ticks(minorK, 3) +
    axis([[72,'15.00'],[110,'14.00'],[149,'13.00'],[188,'12.00'],[226,'11.00'],[265,'10.00']]) +
    text(19, 58, '浦发银行', 't-lb') +
    text(203, 58, '13.94', 't-y') + text(240, 58, 'MA20: 13.47', 't-m') + text(311, 58, 'MA60: 11.33', 't-g') +
    '<path d="M872 47l5 5-5 5-5-5z" class="icon-l"/><rect x="881.500" y="47.500" width="9" height="9" class="frame"/><line x1="886" y1="47" x2="886" y2="57" class="frame"/>' +
    '<path d="M822 64L831 67" class="ln ln-w"/>' + text(836, 76, '15.20', 't-hi')
  );

  /* volume: [i, top(3x crop), kind] */
  var V = {};
  [[0,438,'u'],[1,438,'u'],[2,436,'d'],[3,440,'d'],[4,432,'d'],[20,432,'u'],[21,408,'d'],[22,432,'d'],[23,408,'u'],[24,393,'u'],[25,426,'d'],[26,438,'u'],[27,426,'u'],[28,426,'d'],[29,438,'u'],[30,432,'u'],[31,432,'d'],[32,426,'u'],[33,432,'u'],[34,426,'u'],[35,432,'d'],[36,438,'d'],[37,426,'u'],[38,390,'u'],[39,420,'d'],[40,430,'d'],[41,435,'d'],[42,438,'d'],[43,430,'d'],[44,435,'d'],[45,428,'d'],[46,435,'u'],
   [47,421,'u'],[48,418,'u'],[49,346,'u'],[50,405,'d'],[51,418,'d'],[52,423,'d'],[53,436,'u'],[54,400,'u'],[55,380,'u'],[56,310,'u'],[57,370,'u'],[58,370,'d'],[59,410,'u'],[60,400,'d'],[61,400,'d'],[62,427,'u'],[63,420,'u'],[64,415,'u'],[65,380,'u'],[66,400,'u'],[67,380,'u'],[68,380,'u'],[69,268,'u'],[70,318,'d'],[71,322,'u'],[72,291,'d'],[73,291,'u'],[74,262,'u'],[75,297,'u'],[76,258,'d'],[77,316,'u'],[78,358,'u'],[79,395,'d'],[80,375,'d'],[81,380,'u'],[82,258,'u'],[83,342,'d'],[84,355,'u'],[85,300,'u'],[86,360,'d'],[87,362,'d'],[88,354,'u'],[89,354,'u']
  ].forEach(function (v) { V[v[0]] = v; });
  var vBody = '';
  Object.keys(V).forEach(function (k) {
    var v = V[k], top = Math.round(240 + v[1] / 3), x = bx(v[0]);
    vBody += rect(x + .5, top + .5, 6, 393 - top, v[2] === 'u' ? 'up' : 'dn');
  });
  var vY = zoomPts([57,435,190,435], 0, 240).concat(zoomPts([620,432,700,428,760,412,860,425,1000,432,1100,432,1150,425,1300,430,1380,428], 0, 240),
    zoomPts([0,428,40,428,70,410,100,408,180,412,250,390,320,365,380,380,460,415,500,412,560,395,620,350,680,330,750,297,790,297,830,282,880,292,970,360,1040,345,1090,325,1140,348,1195,348], 460, 240));
  var vM = zoomPts([57,433,190,433], 0, 240).concat(zoomPts([620,433,700,436,860,425,1380,428], 0, 240),
    zoomPts([0,428,60,422,170,412,300,385,400,385,480,390,560,395,640,370,740,345,800,315,870,298,960,320,1000,315,1080,330,1120,345,1195,347], 460, 240));
  svg('p-v', 18, 306, 925, 88,
    grid([339, 366]) + vBody + poly(vY, 'ln ln-y') + poly(vM, 'ln ln-m') +
    frame(306, 394) + ticks([339, 366], 6) + ticks([352, 380], 3) +
    axis([[339,'70000'],[366,'35000']]) +
    rect(893.500, 377.500, 31, 15, 'frame') + text(895, 389, 'X100', 't-x') +
    text(19, 319, 'VOL-TDX', 't-lb') +
    text(217, 319, 'VOLUME: 4669831.50&#160;&#160;MAVOL1: 4930624.00', 't-y') +
    text(467, 319, 'MAVOL2: 5044601.50', 't-m')
  );

  /* SUPL */
  var lW = zoomPts([66,560,150,582,186,612], 0, 240).concat(zoomPts([620,680,660,670,690,683,745,635,770,660,900,658,940,672,1040,670,1070,685,1110,683,1140,660,1200,665,1220,680,1290,690,1340,715,1380,720], 0, 240),
    zoomPts([0,720,40,716,70,670,100,675,130,685,160,698,190,695,210,680,240,668,265,640,295,633,325,652,380,672,410,705,440,710,490,697,540,665,600,650,630,603,660,625,688,597,718,628,745,608,770,628,802,612,830,650,860,650,910,670,945,700,985,675,1015,678,1040,675,1085,655,1110,670,1140,712,1170,705,1195,673], 460, 240));
  var lO = zoomPts([66,522,186,570,620,645,720,660,1000,660,1200,670,1380,688], 0, 240).concat(
    zoomPts([0,688,40,695,110,697,240,693,320,670,400,670,480,678,600,678,680,660,750,637,810,628,890,628,960,650,1040,665,1120,670,1195,683], 460, 240));
  svg('p-l', 18, 394, 925, 87,
    poly(lO, 'ln ln-o') + poly(lW, 'ln-wt') + frame(394, 481) +
    text(19, 408, 'SUPL(10', 't-lb') + text(205, 408, ': -10.61', 't-o')
  );

  /* SUPV: [olive top, red top, green bottom, olive bottom] in crop units, centre 132 */
  var S = [
    [123,130,141,147],[123,130,141,147],[123,130,144,147],[126,132,141,144],[120,130,144,150]
  ];
  var S2 = [[123,130,144,147],[108,117,150,162],[120,132,141,150],[108,111,150,162],[99,108,156,168],[114,123,150,156],[123,129,144,147],[114,123,150,153],[117,123,150,153],[123,129,141,144],[120,129,144,150],[120,129,144,150],[117,123,150,153],[117,123,150,153],[120,129,147,150],[120,126,147,153],[123,129,144,150],[117,123,150,153],[99,111,156,168],[117,126,150,153],[120,129,144,150],[120,129,144,147],[123,129,147,150],[120,129,144,150],[120,129,147,150],[117,129,150,153],[120,129,147,150],
    [114,120,147,156],[114,120,147,156],[78,93,168,192],[105,117,153,165],[114,123,150,156],[114,123,147,153],[120,129,144,147],[87,96,168,183],[78,90,180,192],[57,78,186,210],[102,111,156,168],[90,105,168,180],[111,120,150,159],[108,117,153,162],[105,117,159,165],[117,123,147,153],[114,120,147,156],[108,117,150,159],[78,93,174,192],[99,111,156,168],[81,96,171,189],[81,99,171,186],[36,60,204,231],[63,87,186,207],[66,87,180,204],[48,78,195,219],[51,75,192,219],[33,72,198,234],[51,75,192,216],[33,66,210,237],[63,84,186,207],[81,99,171,186],[96,111,159,171],[93,111,162,174],[84,99,168,186],[33,75,192,237],[75,96,174,192],[84,99,168,186],[54,78,189,216],[81,102,171,186],[84,105,171,183],[81,96,171,189],[78,96,171,189]];
  var sBody = '';
  function sBar(i, b) {
    var x = bx(i), f = function (z) { return Math.round(490 + z / 3); };
    sBody += rect(x, f(b[0]), 7, f(b[1]) - f(b[0]), 'b-ol') + rect(x, f(b[1]), 7, 534 - f(b[1]), 'b-rd') +
      rect(x, 534, 7, f(b[2]) - 534, 'b-gr') + rect(x, f(b[2]), 7, f(b[3]) - f(b[2]), 'b-ol');
  }
  S.forEach(function (b, i) { sBar(i, b); });
  S2.forEach(function (b, i) { sBar(i + 20, b); });
  svg('p-s', 18, 481, 925, 88,
    sBody + line(18, 534.5, 860, 534.5, 'zero') + frame(481, 569) + ticks([496], 6) + ticks([514, 533, 551], 3) +
    axis([[496,'100000']]) + rect(893.500, 552.500, 31, 15, 'frame') + text(895, 564, 'X100', 't-x') +
    text(19, 495, 'SUPV 主', 't-lb') + text(208, 495, '买量: 3303172.75', 't-r') + text(310, 495, '主力卖量: 2928841.00', 't-g')
  );

  /* SUPH: [top in crop units, pink?] */
  var H1 = [484,481,481,487,478,484,481,481,487,487,490,487,475,475,481,475,472,477,475,484,481,457,475,451,436,469,481,469,472,484,475,478,472,472,472,478,481,472,436,469,475,478,481,475,475,472,481,
    462,462,396,447,465,465,477,399,375,348,438,411,453,450,441,465,462,453,390,435,393,399,297,360,369,336,339,321,336,297,360,402,435,426,402,333,390,402,345,402,411,399,396];
  var pink = {8:1,10:1,13:1,21:1,23:1,24:1,27:1,32:1,33:1,34:1,37:1,38:1,48:1,49:1,54:1,55:1,56:1,57:1,62:1,63:1,64:1,65:1,66:1,67:1,68:1,69:1,71:1,73:1,75:1,81:1,82:1,84:1,85:1,88:1,89:1};
  var hBody = H1.map(function (z, i) {
    var top = Math.round(490 + z / 3);
    return rect(bx(i), top, 7, 657 - top, pink[i] ? 'b-pk' : 'b-gg');
  }).join('');
  svg('p-h', 18, 569, 925, 88,
    grid([607, 631]) + hBody + frame(569, 657) + ticks([607, 631], 6) + ticks([619], 3) +
    axis([[607,'3.00'],[631,'1.50']]) +
    '<rect x="893" y="570" width="49" height="86" class="frame2"/>' +
    text(19, 582, 'SUPH', 't-lb') + text(57, 582, '主力活跃度: 2.09', 't-wh')
  );

  /* date axis */
  var dt = [[124,'9'],[323,'10'],[491,'11'],[679,'12']];
  var dBody = dt.map(function (d) { return line(d[0] + .5, 657, d[0] + .5, 673, 'frame') + text(d[0] + 2, 670, d[1], 't-r'); }).join('');
  [174, 223, 273, 364, 411, 524, 538, 585, 632].forEach(function (x) { dBody += line(x + .5, 657, x + .5, 659, 'frame'); });
  svg('p-d', 18, 657, 925, 16,
    dBody + text(23, 670, '2014年', 't-r') + line(892.5, 657, 892.5, 673, 'frame') + line(18, 672.5, 943, 672.5, 'frame') + text(917, 670, '日线', 't-day')
  );

  /* earnings bars */
  var bars = [[822,352],[847,324],[870,331],[894,349],[982,332],[1006,299],[1030,301],[1054,286],[1143,295],[1167,269],[1191,265]];
  var eBody = bars.map(function (b) {
    var x = Math.round(940 + b[0] / 3), y = Math.round(b[1] / 3);
    return '<rect x="' + x + '.5" y="' + y + '.5" width="5" height="' + (171 - y) + '" class="e-bar"/>';
  }).join('');
  var labels = [[77,'1.39'],[101,'1.04'],[124,'0.69'],[148,'0.35'],[172,'0.00']];
  var eTxt = labels.map(function (l) { return '<text x="1199" y="' + (l[0] + 5) + '" class="e-t e-end">' + l[1] + '</text>'; }).join('');
  [['1229','2012'],['1282','2013'],['1335','2014']].forEach(function (y) { eTxt += '<text x="' + y[0] + '" y="187" class="e-t e-mid">' + y[1] + '</text>'; });
  eTxt += '<text x="1362" y="82" class="e-n e-end">净利润(100亿)</text>';
  svg('p-e', 1167, 67, 199, 124,
    '<path d="M1202.500 77V172.500H1365" class="e-ax"/>' + eBody + eTxt
  );
})();
```
